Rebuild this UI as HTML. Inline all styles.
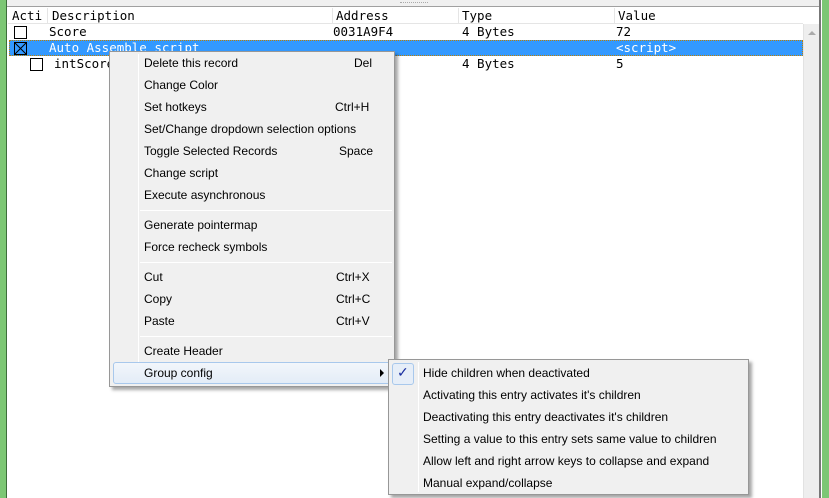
<!DOCTYPE html>
<html><head><style>
*{margin:0;padding:0;box-sizing:border-box}
body{width:829px;height:498px;overflow:hidden;background:#fff;position:relative;font-family:"DejaVu Sans Mono","Liberation Mono",monospace;font-size:12px}
.a{position:absolute}
.mono{font-family:"DejaVu Sans Mono","Liberation Mono",monospace;font-size:12.5px;white-space:nowrap}
.cb{position:absolute;width:13px;height:13px;border:1px solid #000;background:#fff}
.menu{position:absolute;background:#f0f0f0;border:1px solid #979797;box-shadow:3px 3px 3px rgba(0,0,0,.35);font-family:"Liberation Sans",sans-serif;font-size:12px;color:#000}
.it{position:absolute;white-space:nowrap}
.sep{position:absolute;height:1px;background:#d7d7d7;border-bottom:1px solid #fff}
</style></head><body>
<div class="a" style="left:0;top:0;width:6px;height:498px;background:#7cc774"></div>
<div class="a" style="left:6px;top:0;width:1px;height:498px;background:#3c6e3a"></div>
<div class="a" style="left:822px;top:0;width:7px;height:498px;background:#7cc774"></div>
<div class="a" style="left:819px;top:0;width:2px;height:498px;background:#777"></div>
<div class="a" style="left:7px;top:0;width:812px;height:7px;background:#f0f0f0;border-bottom:1px solid #a0a0a0"></div>
<div class="a" style="left:400px;top:2px;width:28px;height:3px;border-top:1px dotted #aaa"></div>
<div class="a" style="left:803px;top:24px;width:16px;height:474px;background:#eee;border-left:1px solid #e2e2e2"></div>
<div class="a" style="left:808px;top:31px;width:0;height:0;border-left:4px solid transparent;border-right:4px solid transparent;border-bottom:4px solid #aaa"></div>
<!-- header -->
<div class="a" style="left:8px;top:8px;width:795px;height:16px;border-bottom:1px solid #e5e5e5"></div>
<div class="a mono" style="left:12px;top:8px">Acti</div>
<div class="a" style="left:47px;top:8px;width:1px;height:16px;background:#e5e5e5"></div>
<div class="a mono" style="left:52px;top:8px">Description</div>
<div class="a" style="left:332px;top:8px;width:1px;height:16px;background:#e5e5e5"></div>
<div class="a mono" style="left:336px;top:8px">Address</div>
<div class="a" style="left:458px;top:8px;width:1px;height:16px;background:#e5e5e5"></div>
<div class="a mono" style="left:462px;top:8px">Type</div>
<div class="a" style="left:614px;top:8px;width:1px;height:16px;background:#e5e5e5"></div>
<div class="a mono" style="left:618px;top:8px">Value</div>
<!-- rows -->
<div class="cb" style="left:14px;top:26px"></div>
<div class="a mono" style="left:49px;top:24px">Score</div>
<div class="a mono" style="left:333px;top:24px">0031A9F4</div>
<div class="a mono" style="left:462px;top:24px">4 Bytes</div>
<div class="a mono" style="left:616px;top:24px">72</div>
<div class="a" style="left:9px;top:40px;width:794px;height:16px;background:#3399ff;border:1px dotted #c08000"></div>
<div class="cb" style="left:14px;top:42px;background:#3399ff"><svg width="13" height="13" style="position:absolute;left:-1px;top:-1px"><path d="M1 1L12 12M12 1L1 12" stroke="#000"/></svg></div>
<div class="a mono" style="left:49px;top:40px;color:#fff">Auto Assemble script</div>
<div class="a mono" style="left:616px;top:40px;color:#fff">&lt;script&gt;</div>
<div class="cb" style="left:30px;top:58px"></div>
<div class="a mono" style="left:54px;top:56px">intScore</div>
<div class="a mono" style="left:462px;top:56px">4 Bytes</div>
<div class="a mono" style="left:616px;top:56px">5</div>
<!-- menu 1 -->
<div class="menu" style="left:109px;top:51px;width:286px;height:336px">
<div class="a" style="left:28px;top:2px;width:1px;height:330px;background:#e2e2e2;border-right:1px solid #fff"></div>
<div class="it" style="left:34px;top:4px">Delete this record</div><div class="it" style="left:244px;top:4px">Del</div>
<div class="it" style="left:34px;top:26px">Change Color</div>
<div class="it" style="left:34px;top:48px">Set hotkeys</div><div class="it" style="left:225px;top:48px">Ctrl+H</div>
<div class="it" style="left:34px;top:70px">Set/Change dropdown selection options</div>
<div class="it" style="left:34px;top:92px">Toggle Selected Records</div><div class="it" style="left:229px;top:92px">Space</div>
<div class="it" style="left:34px;top:114px">Change script</div>
<div class="it" style="left:34px;top:136px">Execute asynchronous</div>
<div class="sep" style="left:30px;top:158px;width:252px"></div>
<div class="it" style="left:34px;top:166px">Generate pointermap</div>
<div class="it" style="left:34px;top:188px">Force recheck symbols</div>
<div class="sep" style="left:30px;top:210px;width:252px"></div>
<div class="it" style="left:34px;top:218px">Cut</div><div class="it" style="left:226px;top:218px">Ctrl+X</div>
<div class="it" style="left:34px;top:240px">Copy</div><div class="it" style="left:226px;top:240px">Ctrl+C</div>
<div class="it" style="left:34px;top:262px">Paste</div><div class="it" style="left:226px;top:262px">Ctrl+V</div>
<div class="sep" style="left:30px;top:284px;width:252px"></div>
<div class="it" style="left:34px;top:292px">Create Header</div>
<div class="a" style="left:3px;top:310px;width:278px;height:22px;border:1px solid #a8c8ec;border-radius:3px;background:linear-gradient(#f2f6fb,#e3ecf7)"></div>
<div class="it" style="left:34px;top:314px">Group config</div>
<div class="a" style="left:270px;top:317px;width:0;height:0;border-top:4px solid transparent;border-bottom:4px solid transparent;border-left:4px solid #000"></div>
</div>
<!-- submenu -->
<div class="menu" style="left:388px;top:359px;width:361px;height:136px">
<div class="a" style="left:29px;top:2px;width:1px;height:130px;background:#e2e2e2;border-right:1px solid #fff"></div>
<div class="a" style="left:3px;top:3px;width:22px;height:22px;border:1px solid #a8c8ec;border-radius:3px;background:#e6eef8"></div>
<div class="it" style="left:8px;top:4px;color:#1a2fa0;font-size:14px">✓</div>
<div class="it" style="left:34px;top:6px">Hide children when deactivated</div>
<div class="it" style="left:34px;top:28px">Activating this entry activates it's children</div>
<div class="it" style="left:34px;top:50px">Deactivating this entry deactivates it's children</div>
<div class="it" style="left:34px;top:72px">Setting a value to this entry sets same value to children</div>
<div class="it" style="left:34px;top:94px">Allow left and right arrow keys to collapse and expand</div>
<div class="it" style="left:34px;top:116px">Manual expand/collapse</div>
</div>
</body></html>
